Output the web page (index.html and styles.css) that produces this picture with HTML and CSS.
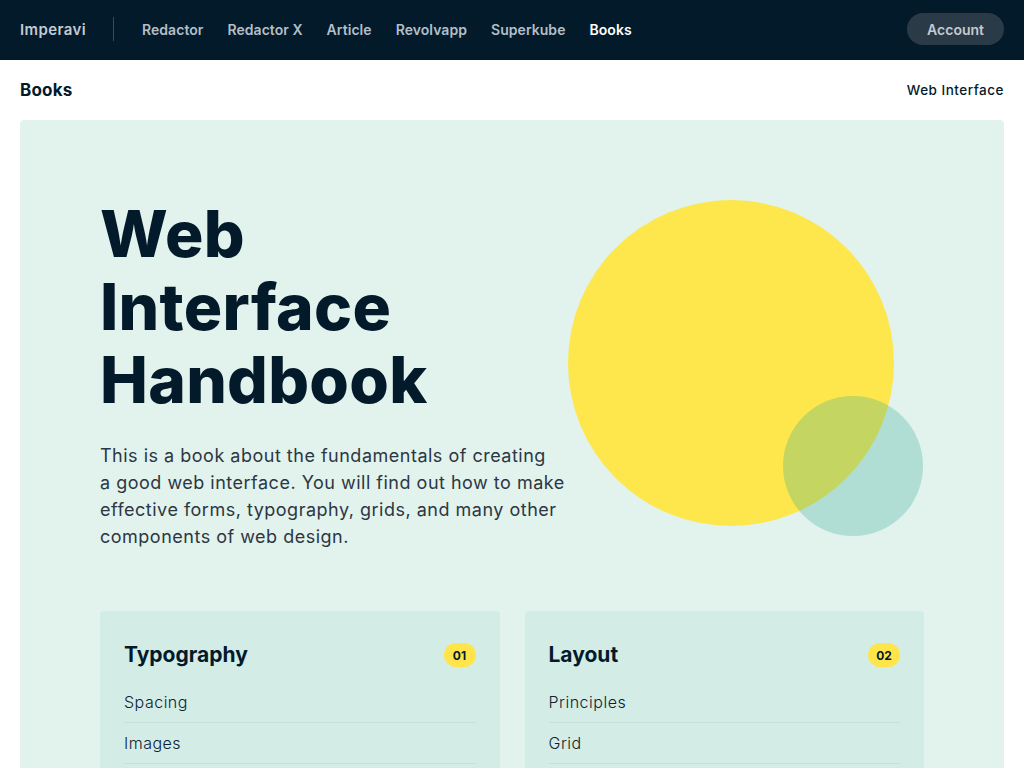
FILE: index.html
```html
<!DOCTYPE html>
<html lang="en">
<head>
<meta charset="utf-8">
<title>Web Interface Handbook</title>
<link rel="stylesheet" href="styles.css">
</head>
<body>
<header class="topbar">
  <a class="brand" href="#">Imperavi</a>
  <span class="sep"></span>
  <nav class="nav">
    <a href="#">Redactor</a>
    <a href="#">Redactor X</a>
    <a href="#">Article</a>
    <a href="#">Revolvapp</a>
    <a href="#">Superkube</a>
    <a href="#" class="active">Books</a>
  </nav>
  <a class="account" href="#">Account</a>
</header>
<div class="subbar">
  <span class="subbar-title">Books</span>
  <a class="subbar-link" href="#">Web Interface</a>
</div>
<main class="panel">
  <section class="hero">
    <div class="hero-text">
      <h1>Web<br>Interface<br>Handbook</h1>
      <p>This is a book about the fundamentals of creating<br>a good web interface. You will find out how to make<br>effective forms, typography, grids, and many other<br>components of web design.</p>
    </div>
    <div class="art">
      <span class="circle yellow"></span>
      <span class="circle teal"></span>
    </div>
  </section>
  <section class="cards">
    <div class="card">
      <div class="card-head"><h2>Typography</h2><span class="badge">01</span></div>
      <ul>
        <li>Spacing</li>
        <li>Images</li>
      </ul>
    </div>
    <div class="card">
      <div class="card-head"><h2>Layout</h2><span class="badge">02</span></div>
      <ul>
        <li>Principles</li>
        <li>Grid</li>
      </ul>
    </div>
  </section>
</main>
</body>
</html>
```
FILE: styles.css
```css
* { box-sizing: border-box; }
html, body { margin: 0; padding: 0; }
body {
  font-family: Inter, "Noto Sans", sans-serif;
  background: #fff;
  color: #031a2b;
  overflow: hidden;
}
a { text-decoration: none; color: inherit; }

.topbar {
  height: 60px;
  background: #031a2b;
  display: flex;
  align-items: center;
  padding: 0 20px 2px;
}
.brand {
  color: #c3cad1;
  font-size: 15px;
  font-weight: 600;
  letter-spacing: 0.4px;
}
.sep {
  width: 1px;
  height: 24px;
  background: #3a4a57;
  margin: 0 28px 0 27px;
}
.nav {
  display: flex;
  gap: 24px;
  flex: 1;
}
.nav a {
  color: #b4bec8;
  font-size: 14px;
  font-weight: 600;
  letter-spacing: 0.05px;
}
.nav a.active { color: #fff; }
.account {
  background: #2b3a47;
  color: #c3cad1;
  font-size: 14px;
  font-weight: 600;
  height: 32px;
  padding: 0 20px;
  border-radius: 16px;
  display: flex;
  align-items: center;
}

.subbar {
  height: 60px;
  display: flex;
  align-items: center;
  justify-content: space-between;
  padding: 0 20px;
}
.subbar-title {
  font-size: 17px;
  font-weight: 700;
  letter-spacing: 0.2px;
}
.subbar-link {
  font-size: 13.5px;
  font-weight: 500;
  letter-spacing: 0.5px;
}

.panel {
  margin: 0 20px;
  background: #e2f2ed;
  border-radius: 4px;
  padding: 77px 80px 40px;
  min-height: 700px;
}
.hero {
  display: flex;
  justify-content: space-between;
}
.hero h1 {
  margin: 0;
  font-size: 64px;
  line-height: 73px;
  font-weight: 800;
  letter-spacing: 0.3px;
  color: #031a2b;
}
.hero p {
  margin: 26px 0 0;
  font-size: 18px;
  line-height: 27px;
  color: #2c3742;
  font-weight: 400;
  letter-spacing: 0.5px;
}
.art {
  position: relative;
  width: 356px;
  height: 336px;
  margin-top: 3px;
  flex: none;
}
.circle {
  position: absolute;
  border-radius: 50%;
}
.yellow {
  left: 0;
  top: 0;
  width: 326px;
  height: 326px;
  background: #fee74c;
}
.teal {
  left: 215px;
  top: 196px;
  width: 140px;
  height: 140px;
  background: rgba(54, 172, 150, 0.286);
}

.cards {
  margin-top: 61px;
  display: grid;
  grid-template-columns: 1fr 1fr;
  gap: 25px;
}
.card {
  background: #d3ece5;
  border-radius: 4px;
  padding: 31px 24px 20px;
}
.card-head {
  display: flex;
  align-items: center;
  justify-content: space-between;
  margin-bottom: 14px;
}
.card h2 {
  margin: 0;
  font-size: 21px;
  line-height: 26px;
  font-weight: 700;
  letter-spacing: 0;
}
.badge {
  background: #ffe54a;
  border-radius: 12px;
  height: 24px;
  min-width: 32px;
  padding: 0 8px;
  display: flex;
  align-items: center;
  justify-content: center;
  font-size: 12px;
  font-weight: 700;
}
.card ul {
  list-style: none;
  margin: 0;
  padding: 0;
}
.card li {
  font-size: 16px;
  line-height: 21px;
  font-weight: 300;
  padding: 10px 0 9px;
  border-bottom: 1px solid #c3e2d9;
  color: #0d2233;
  letter-spacing: 0.5px;
}
```
